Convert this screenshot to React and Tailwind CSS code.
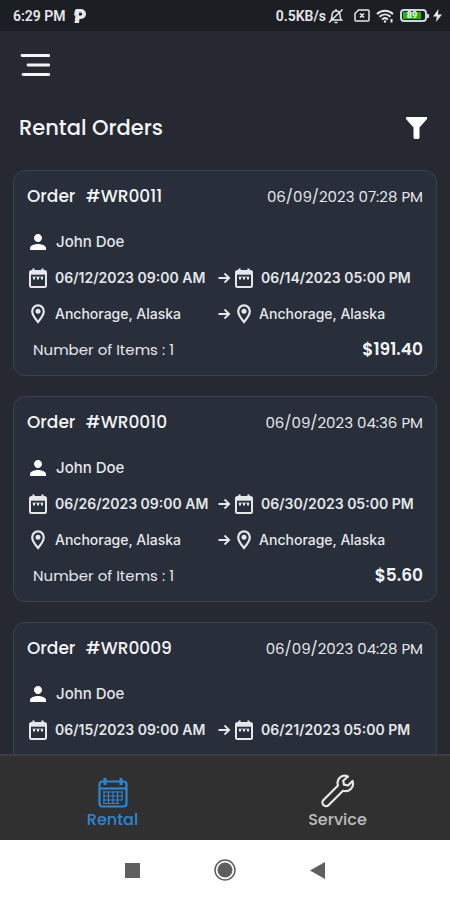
import React, { useState } from 'react';
import { MdPerson } from 'react-icons/md';

const orders = [
  { id: 'WR0011', created: '06/09/2023 07:28 PM', customer: 'John Doe', from: '06/12/2023 09:00 AM', to: '06/14/2023 05:00 PM', pickup: 'Anchorage, Alaska', dropoff: 'Anchorage, Alaska', items: 1, total: '$191.40' },
  { id: 'WR0010', created: '06/09/2023 04:36 PM', customer: 'John Doe', from: '06/26/2023 09:00 AM', to: '06/30/2023 05:00 PM', pickup: 'Anchorage, Alaska', dropoff: 'Anchorage, Alaska', items: 1, total: '$5.60' },
  { id: 'WR0009', created: '06/09/2023 04:28 PM', customer: 'John Doe', from: '06/15/2023 09:00 AM', to: '06/21/2023 05:00 PM' },
];

function CalendarIcon() {
  return (
    <svg viewBox="0 0 18 20" className="w-[18px] h-5 shrink-0" fill="none" stroke="currentColor">
      <rect x="1" y="3" width="16" height="16" rx="1.5" strokeWidth="2" />
      <path d="M1 5.2h16" strokeWidth="3" />
      <path d="M4.5 0.5v4M13.500 0.5v4" strokeWidth="2.2" />
      <path d="M3.500 9h11" strokeWidth="1" opacity="0.7" />
      <path d="M4 10.3h2M8 10.3h2M12 10.3h2" strokeWidth="2.4" />
    </svg>
  );
}

function PinIcon() {
  return (
    <svg viewBox="0 0 14 20" className="w-3.5 h-5 shrink-0" fill="none" stroke="currentColor">
      <path d="M7 18C3.600 14 1.200 10.700 1.200 7.200a5.800 5.800 0 0 1 11.600 0c0 3.500-2.400 6.800-5.800 10.800z" strokeWidth="2.2" />
      <circle cx="7" cy="7.300" r="2.500" fill="currentColor" stroke="none" />
    </svg>
  );
}

function ArrowIcon() {
  return (
    <svg viewBox="0 0 13 12" className="w-[13px] h-3 shrink-0" fill="none" stroke="currentColor" strokeWidth="1.800">
      <path d="M0.500 6h11M6.500 1.500 11.200 6l-4.700 4.500" />
    </svg>
  );
}

function StatusBar() {
  return (
    <div className="h-[31px] shrink-0 flex items-center justify-between bg-[#1b1f24] text-gray-200 pl-[13px] pr-2 font-['Roboto',sans-serif]">
      <div className="flex items-center gap-2 text-sm font-semibold">
        <span>6:29 PM</span>
        <svg viewBox="0 0 12 14" className="w-3 h-3.5" fill="currentColor">
          <path fillRule="evenodd" d="M2.500 0H7a5 5 0 0 1 0 10H5.500L5 14H.5l1-7.500H0L.8 2A2.500 2.500 0 0 1 2.500 0zM5.200 3.500 4.800 6.500h1.900a1.500 1.500 0 0 0 0-3z" />
        </svg>
      </div>
      <div className="flex items-center">
        <span className="text-sm font-semibold">0.5KB/s</span>
        <svg viewBox="0 0 16 16" className="w-4 h-4 ml-0.5" fill="none" stroke="currentColor" strokeWidth="1.500">
          <path d="M3 12h10.500c-1-1-1.500-2-1.500-4.500C12 5 10.500 3 8 3S4 5 4 7.500C4 10 3.500 11 3 12zM6.500 14.500h3M8 1v2M1 14.500 14.500 1.500" />
        </svg>
        <svg viewBox="0 0 16 13" className="w-4 h-[13px] ml-2.5" fill="none" stroke="currentColor" strokeWidth="1.500">
          <path d="M4.500 1H14a1 1 0 0 1 1 1v9a1 1 0 0 1-1 1H2a1 1 0 0 1-1-1V4.500zM6 4.500l4 4M10 4.500l-4 4" />
        </svg>
        <svg viewBox="0 0 18 14" className="w-[18px] h-3.5 ml-1.5" fill="none" stroke="currentColor" strokeWidth="2">
          <path d="M1 5c4.500-4.500 11.500-4.500 16 0M3.500 7.800c3.300-3.200 7.700-3.200 11 0M6 10.500c1.800-1.600 4.200-1.600 6 0" />
          <circle cx="9" cy="12.500" r="1.200" fill="currentColor" stroke="none" />
          <path d="M15.500 10v3.500" />
        </svg>
        <div className="flex items-center ml-1.5">
          <div className="w-[27px] h-[13px] rounded border-2 border-gray-300 p-px">
            <div className="h-full w-[86%] bg-[#2fae12] text-white text-[9px] leading-[7px] font-bold text-center">89</div>
          </div>
          <div className="w-0.5 h-1 bg-gray-300" />
        </div>
        <svg viewBox="0 0 9 13" className="w-[9px] h-[13px] ml-1" fill="currentColor">
          <path d="M5.500 0 0 7.500h3.800L3 13l6-7.500H5z" />
        </svg>
      </div>
    </div>
  );
}

function OrderCard({ order }) {
  return (
    <article className="shrink-0 min-h-[206px] border border-[#3d434d] rounded-xl bg-[#282e3a] text-gray-200 px-[13px] pt-[9px] pb-1.5">
      <div className="flex items-center justify-between h-[34px]">
        <h2 className="text-[17px] font-medium text-gray-100">
          Order <span className="ml-1.5">#{order.id}</span>
        </h2>
        <time className="text-[15px]">{order.created}</time>
      </div>
      <div className="flex items-center h-9 mt-2.5 font-['Inter',sans-serif]">
        <MdPerson size={24} className="text-white -ml-px" />
        <span className="ml-1.5 text-[15px] font-medium">{order.customer}</span>
      </div>
      <div className="grid grid-cols-[48%_1fr] items-center h-9 text-sm font-semibold font-['Inter',sans-serif]">
        <div className="flex items-center gap-2 pl-0.5">
          <CalendarIcon />
          <time>{order.from}</time>
        </div>
        <div className="flex items-center pl-px">
          <ArrowIcon />
          <div className="flex items-center gap-2 ml-1">
            <CalendarIcon />
            <time>{order.to}</time>
          </div>
        </div>
      </div>
      {order.pickup && (
        <div className="grid grid-cols-[48%_1fr] items-center h-9 text-sm font-medium font-['Inter',sans-serif]">
          <div className="flex items-center gap-2.5 pl-1">
            <PinIcon />
            <span>{order.pickup}</span>
          </div>
          <div className="flex items-center pl-px">
            <ArrowIcon />
            <div className="flex items-center gap-2 ml-1.5">
              <PinIcon />
              <span>{order.dropoff}</span>
            </div>
          </div>
        </div>
      )}
      {order.total && (
        <div className="flex items-center justify-between h-9">
          <span className="pl-1.5 text-[15px]">Number of Items : {order.items}</span>
          <span className="text-[17px] font-semibold text-gray-100">{order.total}</span>
        </div>
      )}
    </article>
  );
}

function RentalIcon() {
  return (
    <svg viewBox="0 0 30 30" className="w-[30px] h-[30px]" fill="none" stroke="currentColor">
      <rect x="1.500" y="3.500" width="27" height="25" rx="3" strokeWidth="2.200" />
      <path d="M2 10.500h26" strokeWidth="2.200" />
      <path d="M7 0v7M23 0v7" strokeWidth="3" />
      <path d="M5 14h20M5 18h20M5 22h20M5 25.500h16M6 13v13M10.500 13v13M15 13v13M19.500 13v13M24 13v9" strokeWidth="1.200" />
    </svg>
  );
}

function ServiceIcon() {
  return (
    <svg viewBox="0 0 34 34" className="w-[34px] h-[34px] text-gray-200" fill="none" stroke="currentColor" strokeWidth="2.200" strokeLinejoin="round">
      <path d="M27 2.500c-3-1.500-6.500-.800-8.500 1.500-2 2.200-2.300 5-1.500 7.500L2.500 26a3.600 3.600 0 0 0 5 5.200L22 16.800c2.800.800 5.800.200 7.800-1.800 2.300-2.300 2.700-5.300 1.700-8L27 11.500l-4-.800-.800-3.900z" />
    </svg>
  );
}

function App() {
  const [tab, setTab] = useState('rental');

  return (
    <div className="h-screen flex flex-col overflow-hidden bg-[#262932] font-['Poppins','Inter',sans-serif]">
      <StatusBar />
      <header className="shrink-0 text-gray-100 pt-[22px]">
        <button aria-label="Menu" className="block ml-5">
          <svg viewBox="0 0 30 24" className="w-[30px] h-6" stroke="currentColor" strokeWidth="2.800" strokeLinecap="round">
            <path d="M2 2.500h27M8 12h21M3 21.500h26" />
          </svg>
        </button>
        <div className="flex items-center justify-between pl-[19px] pr-[23px] h-[62px] mt-5">
          <h1 className="text-[21px] font-medium">Rental Orders</h1>
          <button aria-label="Filter" className="text-white">
            <svg viewBox="0 0 21 22" className="w-[21px] h-[22px]" fill="currentColor">
              <path d="M0 0h21v2l-7.500 8.500V21l-1 1h-4l-1-1V10.500L0 2z" />
            </svg>
          </button>
        </div>
      </header>

      <main className="flex-1 min-h-0 overflow-y-auto [scrollbar-width:none] flex flex-col gap-5 px-[13px] pt-[11px]">
        {orders.map(order => <OrderCard key={order.id} order={order} />)}
      </main>

      <nav className="shrink-0 h-[86px] grid grid-cols-2 bg-[#303030] border-t-2 border-[#3c3e40]">
        <button onClick={() => setTab('rental')}
          className={`flex flex-col items-center justify-end pb-2 text-base font-medium ${tab === 'rental' ? 'text-[#2f86d2]' : 'text-[#bdbdbd]'}`}>
          <RentalIcon />
          <span>Rental</span>
        </button>
        <button onClick={() => setTab('service')}
          className={`flex flex-col items-center justify-end pb-2 text-base font-medium ${tab === 'service' ? 'text-[#2f86d2]' : 'text-[#bdbdbd]'}`}>
          <ServiceIcon />
          <span>Service</span>
        </button>
      </nav>

      <div className="shrink-0 h-[60px] flex items-center justify-center gap-[74px] bg-white text-[#5f5f5f]">
        <button aria-label="Recent apps" className="w-[15px] h-[15px] bg-[#5f5f5f]" />
        <button aria-label="Home">
          <svg viewBox="0 0 22 22" className="w-[22px] h-[22px]">
            <circle cx="11" cy="11" r="10" fill="none" stroke="currentColor" strokeWidth="1.500" />
            <circle cx="11" cy="11" r="7.500" fill="currentColor" />
          </svg>
        </button>
        <button aria-label="Back">
          <svg viewBox="0 0 15 17" className="w-[15px] h-[17px]" fill="currentColor">
            <path d="M15 0v17L0 8.500z" />
          </svg>
        </button>
      </div>
    </div>
  );
}

export default App;
